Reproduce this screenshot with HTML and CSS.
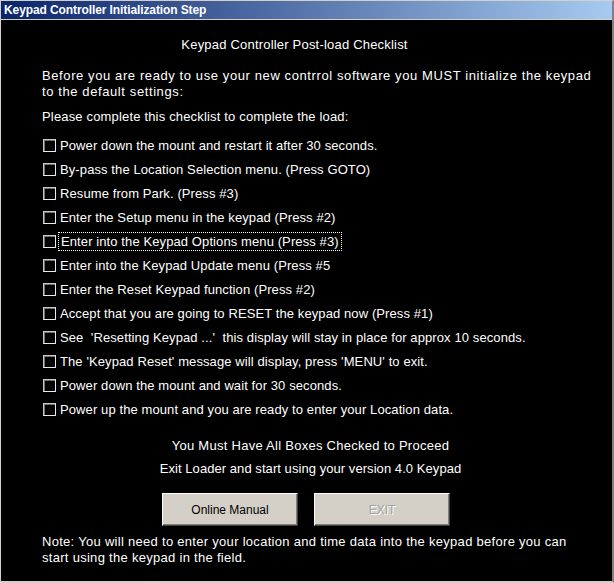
FILE: index.html
```html
<!DOCTYPE html>
<html>
  <head>
    <meta charset="UTF-8" />
    <title>Keypad Controller Initialization Step</title>
    <link rel="stylesheet" href="styles.css">
  </head>
  <body>
    <div class="window">
      <div class="titlebar">Keypad Controller Initialization Step</div>
      <div class="content">
        <div class="heading">Keypad Controller Post-load Checklist</div>

        <p class="intro">
          Before you are ready to use your new contrrol software you MUST initialize the keypad<br />
          to the default settings:
        </p>
        <p class="please">Please complete this checklist to complete the load:</p>

        <!-- checklist -->
        <div class="checklist">
          <label class="item"><span class="box"></span><span>Power down the mount and restart it after 30 seconds.</span></label>
          <label class="item"><span class="box"></span><span>By-pass the Location Selection menu. (Press GOTO)</span></label>
          <label class="item"><span class="box"></span><span>Resume from Park. (Press #3)</span></label>
          <label class="item"><span class="box"></span><span>Enter the Setup menu in the keypad (Press #2)</span></label>
          <label class="item"><span class="box"></span><span class="focus">Enter into the Keypad Options menu (Press #3)</span></label>
          <label class="item"><span class="box"></span><span>Enter into the Keypad Update menu (Press #5</span></label>
          <label class="item"><span class="box"></span><span>Enter the Reset Keypad function (Press #2)</span></label>
          <label class="item"><span class="box"></span><span>Accept that you are going to RESET the keypad now (Press #1)</span></label>
          <label class="item"><span class="box"></span><span>See&nbsp; 'Resetting Keypad ...'&nbsp; this display will stay in place for approx 10 seconds.</span></label>
          <label class="item"><span class="box"></span><span>The 'Keypad Reset' message will display, press 'MENU' to exit.</span></label>
          <label class="item"><span class="box"></span><span>Power down the mount and wait for 30 seconds.</span></label>
          <label class="item"><span class="box"></span><span>Power up the mount and you are ready to enter your Location data.</span></label>
        </div>

        <div class="must">You Must Have All Boxes Checked to Proceed</div>
        <div class="exit-msg">Exit Loader and start using your version 4.0 Keypad</div>

        <div class="buttons">
          <button class="btn">Online Manual</button>
          <button class="btn" disabled>EXIT</button>
        </div>

        <p class="note">
          Note: You will need to enter your location and time data into the keypad before you can<br />
          start using the keypad in the field.
        </p>
      </div>
    </div>
  </body>
</html>
```

FILE: styles.css
```css
html,
body {
  margin: 0;
  padding: 0;
  background: #000;
}

.window {
  width: 614px;
  height: 583px;
  box-sizing: border-box;
  border-top: 1px solid #d4d0c8;
  border-left: 1px solid #d4d0c8;
  border-right: 2px solid #808080;
  border-bottom: 2px solid #d4d0c8;
  background: #000;
  display: flex;
  flex-direction: column;
}

.titlebar {
  height: 18px;
  line-height: 18px;
  padding-left: 3px;
  background: linear-gradient(to right, #0a246a, #a6caf0);
  color: #fff;
  font-family: "Liberation Sans", Arial, sans-serif;
  font-weight: bold;
  font-size: 12px;
  letter-spacing: -0.1px;
  border-bottom: 1px solid #d4d0c8;
}

.content {
  color: #fff;
  font-family: "Liberation Sans", Arial, sans-serif;
  font-size: 13px;
  padding: 0 0 0 41px;
}

.heading {
  text-align: center;
  margin: 17px 0 0 -41px;
  padding-right: 24px;
  line-height: 16px;
  letter-spacing: 0.2px;
}

.intro {
  margin: 15px 0 0;
  line-height: 16px;
  letter-spacing: 0.6px;
  white-space: nowrap;
}

.please {
  margin: 9px 0 0;
  line-height: 16px;
  letter-spacing: 0.17px;
}

.checklist {
  display: flex;
  flex-direction: column;
  margin-top: 8px;
}

.item {
  display: flex;
  align-items: center;
  height: 24px;
  gap: 4px;
  letter-spacing: 0.1px;
}

.box {
  width: 11px;
  height: 11px;
  border: 1px solid #c8c8c8;
  border-right-color: #e8e8e8;
  border-bottom-color: #e8e8e8;
  box-shadow: inset 1px 1px 0 #707070;
  background: #000;
  margin-left: 1px;
}

.focus {
  outline: 1px dotted #fff;
  outline-offset: 1px;
  padding: 0 1px;
}

.must {
  text-align: center;
  margin: 17px 0 0 -41px;
  padding-left: 8px;
  line-height: 16px;
  letter-spacing: 0.27px;
}

.exit-msg {
  text-align: center;
  margin: 7px 0 0 -41px;
  padding-left: 8px;
  line-height: 16px;
  letter-spacing: 0.06px;
}

.buttons {
  display: flex;
  gap: 16px;
  margin: 16px 0 0 120px;
}

.btn {
  width: 136px;
  height: 33px;
  background: #d4d0c8;
  border: 1px solid;
  border-color: #fff #404040 #404040 #fff;
  box-shadow: inset -1px -1px 0 #808080;
  font-family: "Liberation Sans", Arial, sans-serif;
  font-size: 12px;
  color: #000;
  padding: 0;
}

.btn:disabled {
  color: #a0a0a0;
  text-shadow: 1px 1px 0 #fff;
}

.note {
  margin: 8px 0 0;
  line-height: 16px;
  letter-spacing: 0.29px;
  white-space: nowrap;
}
```
